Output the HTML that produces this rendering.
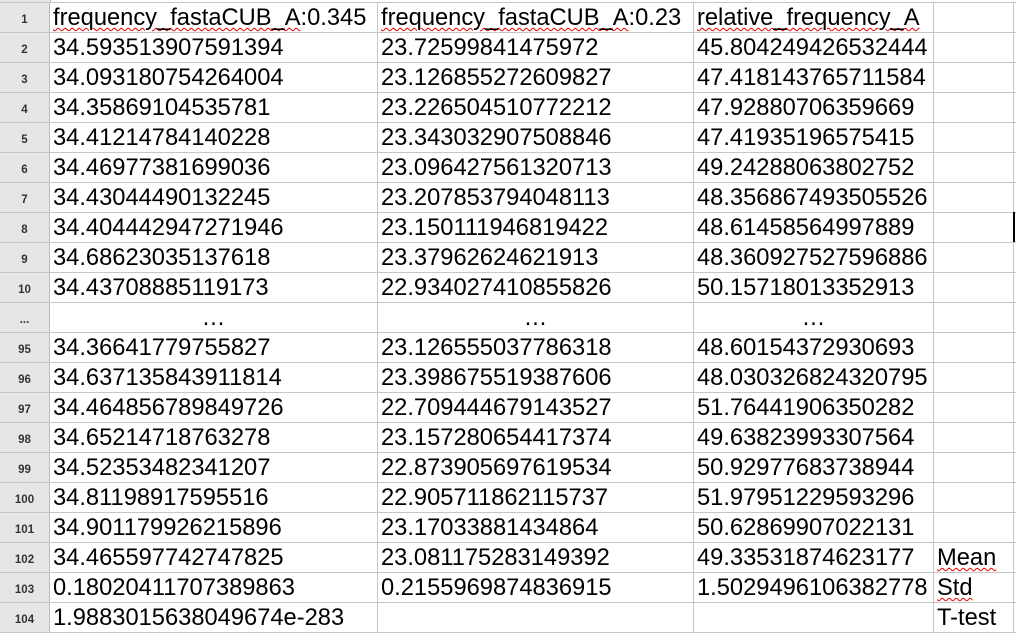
<!DOCTYPE html>
<html><head><style>
body{margin:0;width:1016px;height:631px;overflow:hidden;background:#fff;font-family:"Liberation Sans",sans-serif;position:relative;}
.r{position:absolute;left:0;width:1016px;height:30px;border-bottom:1px solid #c6c6c6;box-sizing:border-box;}
.c{position:absolute;top:0;height:29px;line-height:31px;font-size:23.7px;color:#000;white-space:nowrap;overflow:visible;padding-left:3px;box-sizing:border-box;border-right:1px solid #c6c6c6;}
.h{left:0;width:50px;background:#e6e6e6;color:#333;font-size:11.5px;font-weight:bold;text-align:center;padding:0;line-height:35px;border-right:1px solid #bbb;}
.a{left:50px;width:328px}.b{left:378px;width:316px}.d{left:694px;width:240px}.e{left:934px;width:80px}
.m{text-align:center;padding:0;}
.sq{text-decoration:underline wavy #e00;text-decoration-thickness:1px;text-underline-offset:2px;}
#top{position:absolute;left:0;top:0;width:1016px;height:2px;border-bottom:1px solid #c6c6c6;}
#top .hh{position:absolute;left:0;width:50px;height:2px;background:#e6e6e6;border-right:1px solid #bbb;}
#cur{position:absolute;left:1013px;top:212px;width:2px;height:30px;background:#000;}
</style></head><body>
<div id="top"><div class="hh"></div></div>
<div class="r" style="top:3px"><div class="c h">1</div><div class="c a"><span class="sq">frequency_fastaCUB_A</span>:0.345</div><div class="c b"><span class="sq">frequency_fastaCUB_A</span>:0.23</div><div class="c d"><span class="sq">relative_frequency_A</span></div><div class="c e"></div></div>
<div class="r" style="top:33px"><div class="c h">2</div><div class="c a">34.593513907591394</div><div class="c b">23.72599841475972</div><div class="c d">45.804249426532444</div><div class="c e"></div></div>
<div class="r" style="top:63px"><div class="c h">3</div><div class="c a">34.093180754264004</div><div class="c b">23.126855272609827</div><div class="c d">47.418143765711584</div><div class="c e"></div></div>
<div class="r" style="top:93px"><div class="c h">4</div><div class="c a">34.35869104535781</div><div class="c b">23.226504510772212</div><div class="c d">47.92880706359669</div><div class="c e"></div></div>
<div class="r" style="top:123px"><div class="c h">5</div><div class="c a">34.41214784140228</div><div class="c b">23.343032907508846</div><div class="c d">47.41935196575415</div><div class="c e"></div></div>
<div class="r" style="top:153px"><div class="c h">6</div><div class="c a">34.46977381699036</div><div class="c b">23.096427561320713</div><div class="c d">49.24288063802752</div><div class="c e"></div></div>
<div class="r" style="top:183px"><div class="c h">7</div><div class="c a">34.43044490132245</div><div class="c b">23.207853794048113</div><div class="c d">48.356867493505526</div><div class="c e"></div></div>
<div class="r" style="top:213px"><div class="c h">8</div><div class="c a">34.404442947271946</div><div class="c b">23.150111946819422</div><div class="c d">48.61458564997889</div><div class="c e"></div></div>
<div class="r" style="top:243px"><div class="c h">9</div><div class="c a">34.68623035137618</div><div class="c b">23.37962624621913</div><div class="c d">48.360927527596886</div><div class="c e"></div></div>
<div class="r" style="top:273px"><div class="c h">10</div><div class="c a">34.43708885119173</div><div class="c b">22.934027410855826</div><div class="c d">50.15718013352913</div><div class="c e"></div></div>
<div class="r" style="top:303px"><div class="c h">...</div><div class="c a m">…</div><div class="c b m">…</div><div class="c d m">…</div><div class="c e"></div></div>
<div class="r" style="top:333px"><div class="c h">95</div><div class="c a">34.36641779755827</div><div class="c b">23.126555037786318</div><div class="c d">48.60154372930693</div><div class="c e"></div></div>
<div class="r" style="top:363px"><div class="c h">96</div><div class="c a">34.637135843911814</div><div class="c b">23.398675519387606</div><div class="c d">48.030326824320795</div><div class="c e"></div></div>
<div class="r" style="top:393px"><div class="c h">97</div><div class="c a">34.464856789849726</div><div class="c b">22.709444679143527</div><div class="c d">51.76441906350282</div><div class="c e"></div></div>
<div class="r" style="top:423px"><div class="c h">98</div><div class="c a">34.65214718763278</div><div class="c b">23.157280654417374</div><div class="c d">49.63823993307564</div><div class="c e"></div></div>
<div class="r" style="top:453px"><div class="c h">99</div><div class="c a">34.52353482341207</div><div class="c b">22.873905697619534</div><div class="c d">50.92977683738944</div><div class="c e"></div></div>
<div class="r" style="top:483px"><div class="c h">100</div><div class="c a">34.81198917595516</div><div class="c b">22.905711862115737</div><div class="c d">51.97951229593296</div><div class="c e"></div></div>
<div class="r" style="top:513px"><div class="c h">101</div><div class="c a">34.901179926215896</div><div class="c b">23.17033881434864</div><div class="c d">50.62869907022131</div><div class="c e"></div></div>
<div class="r" style="top:543px"><div class="c h">102</div><div class="c a">34.465597742747825</div><div class="c b">23.081175283149392</div><div class="c d">49.33531874623177</div><div class="c e"><span class="sq">Mean</span></div></div>
<div class="r" style="top:573px"><div class="c h">103</div><div class="c a">0.18020411707389863</div><div class="c b">0.2155969874836915</div><div class="c d">1.5029496106382778</div><div class="c e"><span class="sq">Std</span></div></div>
<div class="r" style="top:603px"><div class="c h">104</div><div class="c a">1.9883015638049674e-283</div><div class="c b"></div><div class="c d"></div><div class="c e">T-test</div></div>
<div id="cur"></div>
</body></html>
